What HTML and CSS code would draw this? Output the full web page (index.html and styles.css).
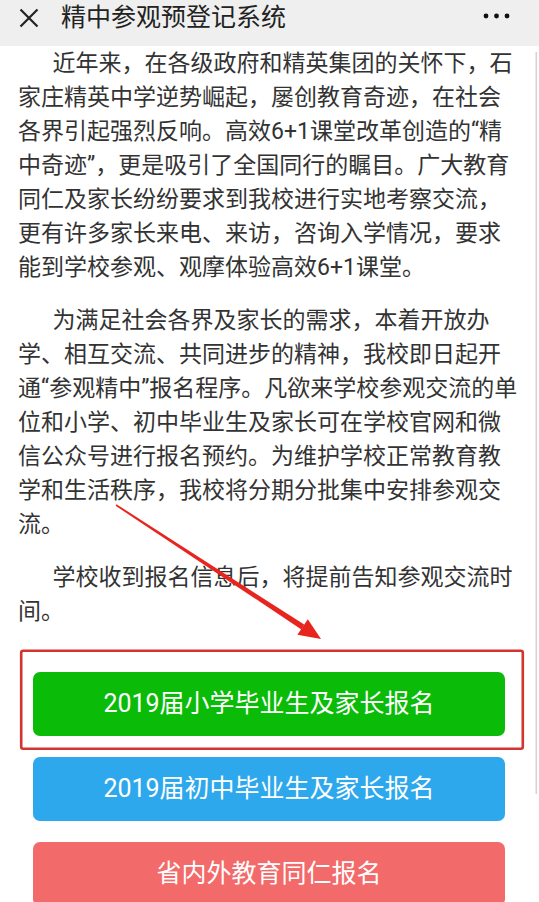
FILE: index.html
```html
<!DOCTYPE html>
<html lang="zh-CN">
<head>
<meta charset="UTF-8">
<meta name="viewport" content="width=device-width, initial-scale=1.0">
<title>精中参观预登记系统</title>
<link rel="stylesheet" href="styles.css">
</head>
<body>
<div class="page">
    <div class="topbar">
        <svg class="close-icon" viewBox="0 0 20 20" width="20" height="20">
            <path d="M1.5 1.5 L18.5 18.5 M18.5 1.5 L1.5 18.5" stroke="#222" stroke-width="2.2" fill="none"/>
        </svg>
        <div class="title">精中参观预登记系统</div>
        <svg class="more-icon" viewBox="0 0 29 8" width="29" height="8">
            <circle cx="4" cy="4" r="2.4" fill="#111"/>
            <circle cx="14.5" cy="4" r="2.4" fill="#111"/>
            <circle cx="25" cy="4" r="2.4" fill="#111"/>
        </svg>
    </div>

    <div class="content">
        <p>近年来，在各级政府和精英集团的关怀下，石家庄精英中学逆势崛起，屡创教育奇迹，在社会各界引起强烈反响。高效6+1课堂改革创造的“精中奇迹”，更是吸引了全国同行的瞩目。广大教育同仁及家长纷纷要求到我校进行实地考察交流，更有许多家长来电、来访，咨询入学情况，要求能到学校参观、观摩体验高效6+1课堂。</p>
        <p>为满足社会各界及家长的需求，本着开放办学、相互交流、共同进步的精神，我校即日起开通“参观精中”报名程序。凡欲来学校参观交流的单位和小学、初中毕业生及家长可在学校官网和微信公众号进行报名预约。为维护学校正常教育教学和生活秩序，我校将分期分批集中安排参观交流。</p>
        <p>学校收到报名信息后，将提前告知参观交流时间。</p>

        <div class="btn-list">
            <a class="btn btn-green">2019届小学毕业生及家长报名</a>
            <a class="btn btn-blue">2019届初中毕业生及家长报名</a>
            <a class="btn btn-red">省内外教育同仁报名</a>
        </div>
    </div>

    <!-- annotation marks drawn over the page -->
    <svg class="marks" viewBox="0 0 539 902" width="539" height="902">
        <rect x="535.5" y="52" width="1.6" height="742" fill="#d4d4d4"/>
        <rect x="21.2" y="650.8" width="501.6" height="98" rx="2" fill="none" stroke="#d2352f" stroke-width="2.6"/>
        <polygon points="116.4,504.2 115.6,505.8 301.4,629.4 304.2,624.6" fill="#e8241e"/>
        <polygon points="321,639 297.4,634.8 307.8,619.2" fill="#e8241e"/>
    </svg>
</div>
</body>
</html>
```

FILE: styles.css
```css
* {
    box-sizing: border-box;
}
body {
    margin: 0;
    background: #fff;
    font-family: Roboto, "Noto Sans CJK SC", sans-serif;
}
.page {
    position: relative;
    width: 539px;
    height: 902px;
    overflow: hidden;
}
.topbar {
    display: flex;
    align-items: flex-start;
    height: 46px;
    padding-left: 19px;
    background-color: #efefef;
}
.close-icon {
    margin-top: 8px;
    flex-shrink: 0;
}
.title {
    margin-left: 22px;
    font-size: 25px;
    line-height: 36px;
    color: #222;
}
.more-icon {
    margin-left: auto;
    margin-right: 28px;
    margin-top: 12px;
}
.content {
    padding: 1px 18px 0 18px;
}
.content p {
    margin: 0 0 19px 0;
    font-size: 23px;
    line-height: 34px;
    text-indent: 1.5em;
    color: #333;
}
.btn-list {
    display: flex;
    flex-direction: column;
    gap: 21px;
    margin: 43px 16px 0 15px;
}
.btn {
    display: block;
    height: 64px;
    line-height: 64px;
    border-radius: 7px;
    text-align: center;
    font-size: 25px;
    color: #fff;
    text-decoration: none;
}
.btn-green {
    background-color: #0abb08;
}
.btn-blue {
    background-color: #2ea8ec;
}
.btn-red {
    background-color: #f36a6a;
}
.marks {
    position: absolute;
    top: 0;
    left: 0;
    pointer-events: none;
}
```
